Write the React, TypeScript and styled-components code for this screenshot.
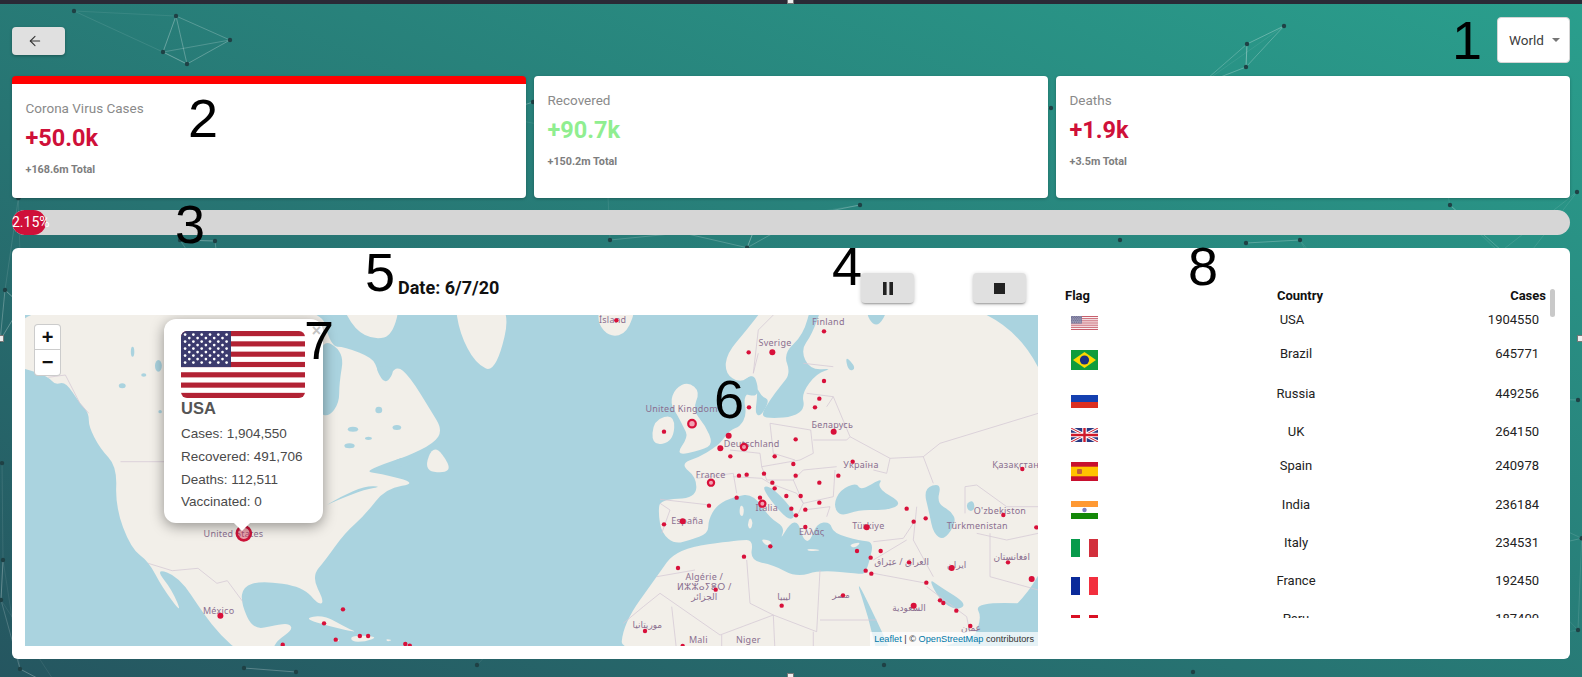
import React from "react";
import styled, { createGlobalStyle } from "styled-components";
import { ArrowLeft } from "lucide-react";

const Global = createGlobalStyle`
  html, body { margin: 0; padding: 0; width: 100%; height: 100%; overflow: hidden; }
  body { font-family: Roboto, "Liberation Sans", sans-serif; background: #2a7a78; }
  * { box-sizing: border-box; }
`;

const Page = styled.div`
  position: relative;
  width: 1582px;
  height: 677px;
  overflow: hidden;
  padding: 0 12px;
  background: linear-gradient(to top right, #255660, #2a9f8d);
`;
const TopStrip = styled.div`
  position: absolute; left: 0; right: 0; top: 0; height: 4px; background: #2a2a36;
`;
const Backdrop = styled.svg`
  position: absolute; left: 0; top: 0; width: 1582px; height: 677px;
`;
const Content = styled.div`
  position: relative;
  display: flex;
  flex-direction: column;
`;
const TopBar = styled.div`
  display: flex;
  justify-content: space-between;
  align-items: center;
  padding-top: 17px;
  height: 63px;
  margin-bottom: 13px;
`;
const BackButton = styled.button`
  width: 53px; height: 28px;
  margin-top: 2px;
  border: 0; border-radius: 4px;
  background: #e0e0e0;
  box-shadow: 0 1px 3px rgba(0,0,0,.3);
  display: flex; align-items: center; padding: 0 0 0 15px;
  color: #333;
`;
const SelectBox = styled.div`
  width: 73px; height: 46px;
  background: #fff;
  border: 1px solid #d5d5d5;
  border-radius: 4px;
  display: flex; align-items: center; gap: 8px;
  padding-left: 11px;
  font-size: 13.5px;
  color: #3c3c3c;
`;
const Caret = styled.span`
  width: 0; height: 0;
  border-left: 4.5px solid transparent;
  border-right: 4.5px solid transparent;
  border-top: 4.5px solid #757575;
`;
const Cards = styled.div`
  display: grid;
  grid-template-columns: repeat(3, 1fr);
  gap: 8px;
  height: 122px;
`;
const Card = styled.div<{ $active?: boolean }>`
  background: #fff;
  border-radius: 4px;
  border-top: ${(p) => (p.$active ? "8px solid #ff0000" : "0")};
  box-shadow: 0 1px 3px rgba(0,0,0,.25);
  padding: 14px 14px 0 13.5px;
`;
const CardTitle = styled.div`
  font-size: 13.5px;
  line-height: 20px;
  color: #8a8a8a;
`;
const CardValue = styled.div<{ $color: string }>`
  font-size: 23.5px;
  font-weight: 700;
  line-height: 36px;
  margin-top: 2px;
  color: ${(p) => p.$color};
`;
const CardTotal = styled.div`
  font-size: 10.8px;
  font-weight: 700;
  line-height: 14px;
  margin-top: 7px;
  color: #7d7d7d;
`;
const Progress = styled.div`
  height: 25px;
  margin-top: 12px;
  border-radius: 13px;
  background: #d6d6d6;
  overflow: hidden;
  display: flex;
`;
const ProgressFill = styled.div`
  height: 100%;
  border-radius: 13px;
  background: #cf1039;
  color: #fff;
  font-size: 14px;
  line-height: 25px;
  white-space: nowrap;
  text-align: center;
`;
const Panel = styled.div`
  margin-top: 13px;
  height: 411px;
  background: #fff;
  border-radius: 6px;
  display: grid;
  grid-template-columns: 1026px 1fr;
  padding-left: 13px;
`;
const LeftCol = styled.div`
  display: flex;
  flex-direction: column;
`;
const Controls = styled.div`
  display: flex;
  align-items: center;
  height: 67px;
  padding: 25px 0 12px 373px;
`;
const DateLabel = styled.div`
  font-size: 18px;
  font-weight: 700;
  color: #111;
  width: 463px;
  margin-top: -2px;
`;
const PlayButton = styled.button<{ $gap?: number }>`
  width: 53px; height: 30px;
  margin-left: ${(p) => p.$gap ?? 0}px;
  border: 0; border-radius: 4px;
  background: #e0e0e0;
  box-shadow: 0 2px 2px -1px rgba(0,0,0,.3), 0 1px 4px rgba(0,0,0,.2);
  display: flex; align-items: center; justify-content: center;
  padding: 0;
`;
const MapFrame = styled.div`
  position: relative;
  width: 1013px;
  height: 331px;
  overflow: hidden;
  background: #aad3df;
  font-family: "Liberation Sans", Arial, sans-serif;
`;
const MapSvg = styled.svg`
  display: block;
  width: 1013px;
  height: 331px;
`;
const MapLabel = styled.text`
  font-family: "Noto Sans", "DejaVu Sans", sans-serif;
  font-size: 9px;
  letter-spacing: .25px;
  fill: #8b6f90;
  text-anchor: middle;
  dominant-baseline: middle;
`;
const ZoomBar = styled.div`
  position: absolute; left: 9px; top: 9px;
  width: 27px;
  border: 1.5px solid rgba(0,0,0,.2);
  border-radius: 4px;
  background: #fff;
`;
const ZoomKey = styled.div<{ $first?: boolean }>`
  height: 25px;
  display: flex; align-items: center; justify-content: center;
  font-size: 20px; font-weight: 700; color: #111;
  font-family: "Liberation Sans", sans-serif;
  border-bottom: ${(p) => (p.$first ? "1px solid #ccc" : "0")};
`;
const Popup = styled.div`
  position: absolute;
  left: 139px; top: 4px;
  width: 159px; height: 204px;
  background: #fff;
  border-radius: 12px;
  box-shadow: 0 3px 14px rgba(0,0,0,.4);
  padding: 12px 17px 0;
  color: #4a4a4a;
`;
const PopupTip = styled.div`
  position: absolute;
  left: 70px; bottom: -7px;
  width: 16px; height: 16px;
  background: #fff;
  transform: rotate(45deg) scale(.8);
`;
const PopupClose = styled.span`
  position: absolute;
  right: 2px; top: 3px;
  font-size: 16px; font-weight: 700;
  color: #c3c3c3;
`;
const PopupFlag = styled.svg`
  display: block;
  width: 124px; height: 67px;
`;
const PopupName = styled.div`
  font-size: 16.5px; font-weight: 700;
  line-height: 20px;
  margin-bottom: 5px;
  color: #555;
`;
const PopupLine = styled.div`
  font-size: 13.5px;
  line-height: 22.8px;
  white-space: nowrap;
`;
const Attribution = styled.div`
  position: absolute; right: 0; bottom: 0;
  background: rgba(255,255,255,.7);
  padding: 0 4px;
  height: 14px;
  line-height: 14px;
  font-size: 9.2px;
  color: #333;
  white-space: nowrap;
`;
const AttrLink = styled.span`
  color: #0078a8;
`;
const RightCol = styled.div`
  position: relative;
  padding: 38px 0 0 14px;
`;
const TableClip = styled.div`
  width: 481px;
  height: 332px;
  overflow: hidden;
`;
const Row = styled.div<{ $head?: boolean }>`
  display: grid;
  grid-template-columns: 160px 150px 1fr;
  align-items: start;
  font-size: 13px;
  line-height: 20px;
  color: #222;
  ${(p) => (p.$head ? "height: 24px; font-weight: 700; color: #111; line-height: 20px;" : "")}
`;
const CountryCell = styled.div<{ $shift?: number; $head?: boolean }>`
  text-align: center;
  padding-right: ${(p) => (p.$head ? 0 : 8 + (p.$shift ?? 0))}px;
`;
const CasesCell = styled.div<{ $head?: boolean }>`
  text-align: right;
  padding-right: ${(p) => (p.$head ? 0 : 7)}px;
`;
const FlagCell = styled.div`
  padding: 6px 0 14px 6px;
`;
const SmallFlag = styled.svg<{ $h: number }>`
  display: block;
  width: 27px;
  height: ${(p) => p.$h}px;
`;
const ScrollThumb = styled.div`
  position: absolute;
  right: 15px; top: 41px;
  width: 5px; height: 28px;
  border-radius: 3px;
  background: #c9c9c9;
`;
const Annotation = styled.span<{ $x: number; $y: number }>`
  position: absolute;
  left: ${(p) => p.$x}px;
  top: ${(p) => p.$y}px;
  font-family: "Liberation Sans", Arial, sans-serif;
  font-size: 54px;
  line-height: 54px;
  color: #000;
  pointer-events: none;
`;
const Handle = styled.span<{ $x: number; $y: number }>`
  position: absolute;
  left: ${(p) => p.$x}px;
  top: ${(p) => p.$y}px;
  width: 7px; height: 7px;
  background: #eee;
  border: 1px solid #777;
`;

/* ---------- background network ---------- */
const fixedNodes: [number, number][] = [
  [74, 11],[176, 16],[230, 40],[163, 52],[187, 64],[1284, 26],[1247, 44],[1246, 67],
  [1051, 108],[1577, 192],[1246, 243],[533, 102],[1,600],[20,669],[244,668],[296,672],
  [477,665],[884,665],[1193,672],[1578,630],[610,240],[180,240],[215,241],[1120,240],
  [1300,240],[60,690],[5,290],[3,560],[1578,400],[1450,205],[860,205],[1200,85]
];
function buildNodes(): [number, number][] {
  let s = 11;
  const r = () => { s = (s * 16807) % 2147483647; return s / 2147483647; };
  const out = [...fixedNodes];
  for (let i = 0; i < 36; i++) out.push([r() * 1582, 90 + r() * 560]);
  return out;
}
const nodes = buildNodes();
const edges: [number, number, number][] = [];
nodes.forEach((a, i) => nodes.forEach((b, j) => {
  const d = Math.hypot(a[0] - b[0], a[1] - b[1]);
  if (j > i && d < 120) edges.push([i, j, d]);
}));

/* ---------- map helpers ---------- */
type Conv = (x: number, y: number) => [number, number];
const z3: Conv = (x, y) => [x / 2.904 - 25, y / 3 - 75];
const z4: Conv = (x, y) => [515 + x / 3, y / 3 - 75];
const pts = (f: Conv, a: number[]) => {
  const o: string[] = [];
  for (let i = 0; i < a.length; i += 2) { const [x, y] = f(a[i], a[i + 1]); o.push(`${x.toFixed(1)},${y.toFixed(1)}`); }
  return o.join(" ");
};
// closed outline, corners softened with quadratic curves through the edge midpoints
const smooth = (f: Conv, a: number[]) => {
  const p: [number, number][] = [];
  for (let i = 0; i < a.length; i += 2) p.push(f(a[i], a[i + 1]));
  const mid = (u: [number, number], v: [number, number]) => [(u[0] + v[0]) / 2, (u[1] + v[1]) / 2];
  const m0 = mid(p[p.length - 1], p[0]);
  let d = `M${m0[0].toFixed(1)} ${m0[1].toFixed(1)}`;
  p.forEach((c, i) => {
    const m = mid(c, p[(i + 1) % p.length]);
    d += `Q${c[0].toFixed(1)} ${c[1].toFixed(1)} ${m[0].toFixed(1)} ${m[1].toFixed(1)}`;
  });
  return d + "Z";
};
const LAND = "#f2efe9";
const WATER = "#aad3df";
const BORDER = "#d6cad6";

const landZ3 = [
  [40,180,40,385,73,385,140,410,160,435,190,425,232,490,258,520,258,560,290,625,340,680,335,800,380,925,432,965,470,1040,530,1125,500,1050,450,985,520,1010,590,1120,640,1185,700,1240,790,1240,800,1205,850,1170,840,1150,800,1155,735,1170,700,1090,705,1040,760,1022,880,1040,925,1095,942,1085,905,1010,945,960,1000,880,1060,825,1120,745,1215,730,1100,700,1060,695,1130,665,1180,650,1260,610,1285,570,1250,510,1190,410,1150,375,1120,430,1095,390,1085,355,1000,320,960,320,925,180],
  [985,180,1165,180,1140,285,1090,300,1030,270],
  [1320,180,1490,180,1440,400,1380,370,1335,280],
  [1230,690,1260,610,1310,680,1290,700],
  [880,1135,940,1125,1010,1165,1040,1178,960,1160],
  [1020,1185,1100,1190,1060,1205,1020,1205],
  [965,1195,990,1200,975,1207],
  [1120,1197,1140,1200,1125,1205],
];
const waterZ3 = [
  [925,290,1000,335,985,430,985,490,955,530,925,520],
  [1095,375,1150,385,1120,435,1095,395],
  [1130,670,1170,650,1200,660,1150,690],
  [1110,740,1060,748,980,780,940,800,990,770,1060,738],
];
const lakesZ3 = [[380,320,390,350],[450,360,470,395],[345,430,365,445],[1010,560,1040,575],[1060,590,1080,600],[1140,555,1165,570],[1000,610,1030,625],[1090,500,1110,520],[410,400,425,410],[520,600,540,615],[460,510,470,520]];
const landZ4 = [
  [690,180,620,270,560,340,555,400,600,430,640,400,640,450,610,470,620,525,600,560,570,570,540,610,520,625,480,650,420,672,470,712,468,775,360,778,355,820,365,880,405,912,450,900,505,880,505,840,530,795,585,768,640,762,690,835,735,862,720,900,750,850,775,845,790,900,810,905,830,850,870,845,880,880,960,902,1000,905,990,960,975,1000,960,1002,840,990,770,1012,700,975,630,962,640,900,600,900,410,925,350,1010,250,1150,240,1260,1560,1260,1560,180],
  [445,425,480,455,458,510,495,555,520,612,485,630,405,648,445,590,430,560,415,530,390,490,405,445],
  [340,540,405,522,400,605,335,618],
  [180,190,292,190,262,280,210,292,172,250],
  [630,830,640,850,630,870,622,855],[660,895,700,905,680,920],[800,925,850,930,805,935],[600,795,612,800,610,830,598,825],[925,915,965,905,945,925],
];
const waterZ4 = [
  [815,190,790,285,730,340,752,400,720,440,690,480,660,530,700,535,760,530,795,505,785,460,830,400,880,385,810,390,782,330,815,285,850,190],
  [600,432,640,400,655,440,650,470,610,462],
  [650,440,665,470,690,480,662,530,645,520,652,470],
  [880,795,900,750,950,728,962,752,1030,712,1010,745,1090,790,1040,812,960,808,900,830],
  [1150,745,1205,728,1190,790,1232,812,1250,845,1212,902,1180,880,1168,820],
  [1278,790,1300,780,1305,810,1285,815],
  [665,735,702,745,770,822,748,845,690,780],
  [945,1010,1000,1120,1065,1260,1015,1260,985,1130],
  [1165,1015,1200,1040,1282,1092,1250,1112,1200,1082],
  [1300,1085,1560,1095,1560,1260,1262,1260,1330,1140],
  [915,345,950,385,925,395],[970,210,1050,200,1010,270],
];
const bordersZ3 = [
  [350,665,477,665],
  [430,970,500,992,575,985,630,1030,660,1022,705,1085],[140,412,190,405,232,490,258,520],
];
const bordersZ4 = [
  [655,340,640,400,655,270,700,225],[790,370,880,380],[800,460,880,470],[860,500,880,470,930,590,1050,655,1040,700,1000,690],
  [690,550,700,640,765,660],[570,630,660,640,665,680,780,660,820,640,812,570,690,550],[820,600,920,600,930,590],
  [470,715,580,700,590,760],[360,778,510,795],[360,790,390,810,365,880],[580,710,665,715,690,730],[665,680,680,720,760,720,790,690,890,680],
  [760,720,790,790,880,770,885,690],[690,730,770,760,790,790],[790,790,770,830],[790,810,870,800,860,830],
  [1150,650,1200,610,1495,520],[1050,655,1150,650,1180,730],[1275,820,1275,740,1310,735,1400,800,1495,800],[1310,880,1400,900,1495,880],
  [1130,800,1120,900,1180,1010],[1000,905,1090,895,1120,850],[1000,960,1100,900],[1000,1000,1160,1030],[1350,880,1350,1010,1495,1050],
  [620,960,630,1090,700,1125,830,1175,840,990],[840,1140,1010,1140],[465,990,350,1010],[360,1060,540,1185,700,1125],[395,1100,410,1235],[545,1185,545,1235],[700,1125,705,1235],[820,1175,820,1235],[250,1150,310,1100,360,1060],
  [1160,1040,1280,1130,1290,1180],
];
const dotsZ4 = [[229,241],[852,274],[626,337],[852,423],[838,476],[825,502],[627,502],[372,575],[767,598],[571,649],[704,649],[760,672],[938,665],[672,701],[597,707],[620,704],[767,707],[895,707],[838,728],[697,728],[704,745],[739,768],[782,768],[590,773],[660,773],[507,797],[838,788],[754,806],[796,809],[768,826],[1100,806],[1157,835],[1121,845],[372,853],[796,861],[1390,825],[1489,862],[691,919],[1022,933],[951,933],[612,950],[992,953],[1107,967],[1404,967],[414,984],[977,992],[994,1001],[1159,1028],[527,1049],[909,1066],[725,1097],[1200,1081],[1210,1089],[1249,1112],[1291,1158],[315,1173],[428,1218],[1447,687]];
const midDotsZ4 = [[566,587],[541,625],[881,575],[1235,984],[1475,1017],[1121,1097],[697,337],[980,862],[428,844]];
const ringsZ4: [number, number, number][] = [[456,551,3.8],[612,621,3.1],[513,728,3.1],[667,791,3.1]];
const dotsZ3 = [[996,1108],[941,1150],[975,1199],[1045,1188],[1069,1188],[1177,1212],[1190,1217],[821,1214]];
const labelsZ4: [string, number, number][] = [
  ["Ísland",218,243],["Finland",865,247],["Sverige",705,310],["United Kingdom",425,508],["Беларусь",877,558],
  ["Deutschland",635,614],["Україна",963,678],["Қазақстан",1427,678],["France",512,708],["Italia",680,807],
  ["España",442,844],["Ελλάς",815,877],["Türkiye",985,861],["O'zbekiston",1380,816],["Türkmenistan",1312,861],
  ["افغانستان",1415,952],["ایران",1250,977],["العراق / عێراق",1085,968],["Algérie /",493,1012],["ⵍⵣⵣⴰⵢⴻⵔ /",493,1042],
  ["الجزائر",493,1072],["ليبيا",732,1072],["مصر",903,1066],["السعودية",1107,1106],["موريتانيا",322,1158],
  ["Mali",475,1202],["Niger",625,1202],["عمان",1293,1165],
];

const WorldMap = () => (
  <MapSvg viewBox="0 0 1013 331">
    {landZ3.map((a, i) => <path key={i} d={smooth(z3, a)} fill={LAND} />)}
    {landZ4.map((a, i) => <path key={i} d={smooth(z4, a)} fill={LAND} />)}
    {waterZ3.map((a, i) => <path key={i} d={smooth(z3, a)} fill={WATER} />)}
    {lakesZ3.map(([x1, y1, x2, y2], i) => {
      const [a, b] = z3(x1, y1); const [c, e] = z3(x2, y2);
      return <ellipse key={i} cx={(a + c) / 2} cy={(b + e) / 2} rx={(c - a) / 2} ry={(e - b) / 2} fill={WATER} />;
    })}
    {waterZ4.map((a, i) => <path key={i} d={smooth(z4, a)} fill={WATER} />)}
    {bordersZ3.map((a, i) => <polyline key={i} points={pts(z3, a)} fill="none" stroke={BORDER} strokeWidth=".8" />)}
    {bordersZ4.map((a, i) => <polyline key={i} points={pts(z4, a)} fill="none" stroke={BORDER} strokeWidth=".8" />)}
    {labelsZ4.map(([t, x, y]) => { const [a, b] = z4(x, y); return <MapLabel key={t} x={a} y={b}>{t}</MapLabel>; })}
    {[["United States", 678, 884], ["México", 635, 1115]].map(([t, x, y]) => {
      const [a, b] = z3(x as number, y as number);
      return <MapLabel key={t as string} x={a} y={b}>{t}</MapLabel>;
    })}
    {dotsZ4.map(([x, y], i) => { const [a, b] = z4(x, y); return <circle key={i} cx={a} cy={b} r="2.2" fill="#d8103a" />; })}
    {midDotsZ4.map(([x, y], i) => { const [a, b] = z4(x, y); return <circle key={i} cx={a} cy={b} r="3" fill="#d8103a" />; })}
    {ringsZ4.map(([x, y, r], i) => { const [a, b] = z4(x, y); return <circle key={i} cx={a} cy={b} r={r} fill="rgba(240,150,170,.85)" stroke="#d8103a" strokeWidth="2.2" />; })}
    {dotsZ3.map(([x, y], i) => { const [a, b] = z3(x, y); return <circle key={i} cx={a} cy={b} r="2.2" fill="#d8103a" />; })}
    {(() => { const [a, b] = z3(640, 1127); return <circle cx={a} cy={b} r="3" fill="#d8103a" />; })()}
    {(() => { const [a, b] = z3(708, 880); return <circle cx={a} cy={b} r="7" fill="rgba(220,20,60,.35)" stroke="#cc1339" strokeWidth="2.6" />; })()}
  </MapSvg>
);

/* ---------- flags ---------- */
const UsFlag = ({ rx = 0 }: { rx?: number }) => (
  <>
    <defs>
      <clipPath id={`fl${rx}`}><rect width="124" height="67" rx={rx} /></clipPath>
    </defs>
    <g clipPath={`url(#fl${rx})`}>
      <rect width="124" height="67" fill="#fff" />
      {Array.from({ length: 7 }).map((_, i) => (
        <rect key={i} y={(i * 2 * 67) / 13} width="124" height={67 / 13} fill="#b22234" />
      ))}
      <rect width="50" height={(67 * 7) / 13} fill="#3c3b6e" />
      {Array.from({ length: 9 }).flatMap((_, r) =>
        Array.from({ length: r % 2 ? 5 : 6 }).map((__, c) => (
          <circle key={`${r}-${c}`} cx={(r % 2 ? 8.3 : 4.1) + c * 8.3} cy={3.6 + r * 3.5} r="1.35" fill="#fff" />
        ))
      )}
    </g>
  </>
);

const tableRows: { name: string; cases: string; h: number; shift?: number; flag: React.ReactNode }[] = [
  { name: "USA", cases: "1904550", h: 14, shift: 8, flag: <g opacity=".72"><svg viewBox="0 0 124 67" width="27" height="14" preserveAspectRatio="none"><UsFlag /></svg></g> },
  { name: "Brazil", cases: "645771", h: 20, flag: <><rect width="27" height="20" fill="#109c3c" /><polygon points="13.5,2 25,10 13.5,18 2,10" fill="#fbd800" /><circle cx="13.5" cy="10" r="4.6" fill="#1b2f80" /></> },
  { name: "Russia", cases: "449256", h: 18, flag: <><rect width="27" height="6" fill="#fff" /><rect y="5" width="27" height="7" fill="#1440b0" /><rect y="12" width="27" height="6" fill="#dc2f20" /></> },
  { name: "UK", cases: "264150", h: 14, flag: <><rect width="27" height="14" fill="#2a3a82" /><path d="M0 0L27 14M27 0L0 14" stroke="#fff" strokeWidth="3" /><path d="M0 0L27 14M27 0L0 14" stroke="#cf1b2b" strokeWidth="1" /><path d="M13.5 0V14M0 7H27" stroke="#fff" strokeWidth="4.5" /><path d="M13.5 0V14M0 7H27" stroke="#cf1b2b" strokeWidth="2.4" /></> },
  { name: "Spain", cases: "240978", h: 19, flag: <><rect width="27" height="19" fill="#c8102e" /><rect y="4.7" width="27" height="9.6" fill="#ffc400" /><rect x="6" y="7" width="5" height="5" rx="1" fill="#c0603a" /></> },
  { name: "India", cases: "236184", h: 18, flag: <><rect width="27" height="6" fill="#ff9933" /><rect y="6" width="27" height="6" fill="#fff" /><rect y="12" width="27" height="6" fill="#138808" /><circle cx="13.5" cy="9" r="2.2" fill="#8080c0" /></> },
  { name: "Italy", cases: "234531", h: 18, flag: <><rect width="9" height="18" fill="#079a4b" /><rect x="9" width="9" height="18" fill="#fff" /><rect x="18" width="9" height="18" fill="#d22f3c" /></> },
  { name: "France", cases: "192450", h: 18, flag: <><rect width="9" height="18" fill="#0a2a9a" /><rect x="9" width="9" height="18" fill="#fff" /><rect x="18" width="9" height="18" fill="#f22f3e" /></> },
  { name: "Peru", cases: "187400", h: 18, flag: <><rect width="9" height="18" fill="#d91023" /><rect x="9" width="9" height="18" fill="#fff" /><rect x="18" width="9" height="18" fill="#d91023" /></> },
];

export default function App() {
  return (
    <Page>
      <Global />
      <Backdrop viewBox="0 0 1582 677">
        {edges.map(([i, j, d]) => (
          <line key={`${i}-${j}`} x1={nodes[i][0]} y1={nodes[i][1]} x2={nodes[j][0]} y2={nodes[j][1]}
            stroke="#fff" strokeOpacity={Math.max(0.08, 0.42 - d / 300)} strokeWidth="1" />
        ))}
        {nodes.map(([x, y], i) => <circle key={i} cx={x} cy={y} r="2.2" fill="#1f4145" />)}
      </Backdrop>
      <TopStrip />
      <Content>
        <TopBar>
          <BackButton aria-label="Back"><ArrowLeft size={16} strokeWidth={1.6} /></BackButton>
          <SelectBox>World<Caret /></SelectBox>
        </TopBar>
        <Cards>
          <Card $active>
            <CardTitle>Corona Virus Cases</CardTitle>
            <CardValue $color="#cf1039">+50.0k</CardValue>
            <CardTotal>+168.6m Total</CardTotal>
          </Card>
          <Card>
            <CardTitle>Recovered</CardTitle>
            <CardValue $color="#90ee90">+90.7k</CardValue>
            <CardTotal>+150.2m Total</CardTotal>
          </Card>
          <Card>
            <CardTitle>Deaths</CardTitle>
            <CardValue $color="#cf1039">+1.9k</CardValue>
            <CardTotal>+3.5m Total</CardTotal>
          </Card>
        </Cards>
        <Progress>
          <ProgressFill style={{ width: "2.2%" }}>2.15%</ProgressFill>
        </Progress>
        <Panel>
          <LeftCol>
            <Controls>
              <DateLabel>Date: 6/7/20</DateLabel>
              <PlayButton aria-label="Pause">
                <svg width="12" height="13" viewBox="0 0 12 13"><rect x="1" width="3.6" height="13" fill="#222" /><rect x="7.4" width="3.6" height="13" fill="#222" /></svg>
              </PlayButton>
              <PlayButton $gap={59} aria-label="Stop">
                <svg width="11" height="11" viewBox="0 0 11 11"><rect width="11" height="11" fill="#222" /></svg>
              </PlayButton>
            </Controls>
            <MapFrame>
              <WorldMap />
              <ZoomBar>
                <ZoomKey $first>+</ZoomKey>
                <ZoomKey>−</ZoomKey>
              </ZoomBar>
              <Popup>
                <PopupClose>×</PopupClose>
                <PopupFlag viewBox="0 0 124 67"><UsFlag rx={6} /></PopupFlag>
                <PopupName>USA</PopupName>
                <PopupLine>Cases: 1,904,550</PopupLine>
                <PopupLine>Recovered: 491,706</PopupLine>
                <PopupLine>Deaths: 112,511</PopupLine>
                <PopupLine>Vaccinated: 0</PopupLine>
                <PopupTip />
              </Popup>
              <Attribution><AttrLink>Leaflet</AttrLink> | © <AttrLink>OpenStreetMap</AttrLink> contributors</Attribution>
            </MapFrame>
          </LeftCol>
          <RightCol>
            <TableClip>
              <Row $head>
                <div>Flag</div>
                <CountryCell $head>Country</CountryCell>
                <CasesCell $head>Cases</CasesCell>
              </Row>
              {tableRows.map((r) => (
                <Row key={r.name}>
                  <FlagCell>
                    <SmallFlag $h={r.h} viewBox={`0 0 27 ${r.h}`}>{r.flag}</SmallFlag>
                  </FlagCell>
                  <CountryCell $shift={r.shift}>{r.name}</CountryCell>
                  <CasesCell>{r.cases}</CasesCell>
                </Row>
              ))}
            </TableClip>
            <ScrollThumb />
          </RightCol>
        </Panel>
      </Content>
      <Annotation $x={1452} $y={13}>1</Annotation>
      <Annotation $x={188} $y={91}>2</Annotation>
      <Annotation $x={175} $y={197}>3</Annotation>
      <Annotation $x={832} $y={239}>4</Annotation>
      <Annotation $x={365} $y={245}>5</Annotation>
      <Annotation $x={714} $y={372}>6</Annotation>
      <Annotation $x={304} $y={313}>7</Annotation>
      <Annotation $x={1188} $y={239}>8</Annotation>
      <Handle $x={-3} $y={335} />
      <Handle $x={1577} $y={335} />
      <Handle $x={787} $y={-3} />
      <Handle $x={787} $y={673} />
    </Page>
  );
}
